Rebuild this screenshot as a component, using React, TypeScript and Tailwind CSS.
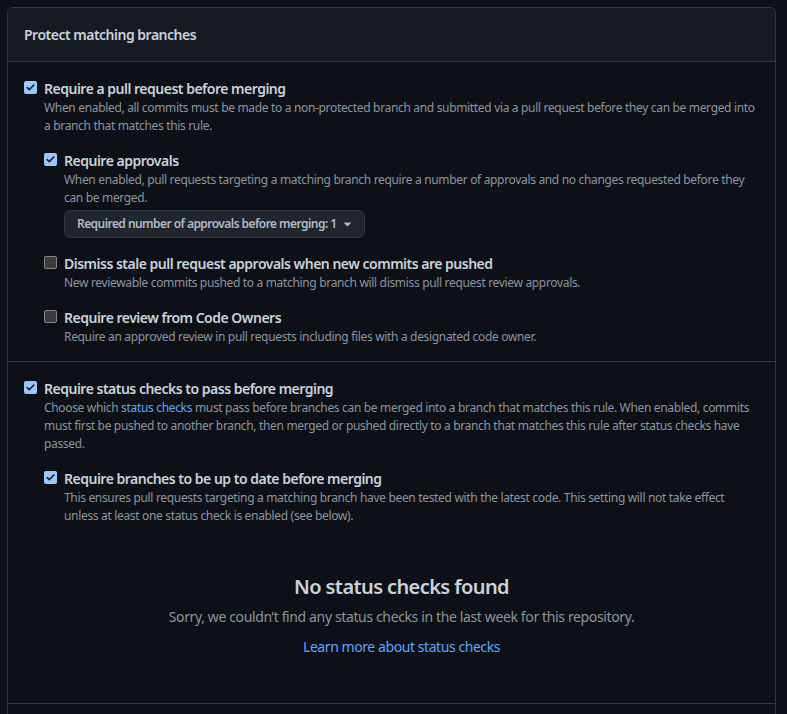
import React from "react";

function Check({ checked }: { checked: boolean }) {
  if (checked) {
    return (
      <span className="mt-[3px] mr-[7px] flex h-[13px] w-[13px] shrink-0 items-center justify-center rounded-[2px] bg-[#99c8ff]">
        <svg width="11" height="11" viewBox="0 0 11 11">
          <path d="M2.2 5.6 L4.3 7.7 L8.8 3.0" fill="none" stroke="#1d232b" strokeWidth="1.7" strokeLinecap="round" strokeLinejoin="round" />
        </svg>
      </span>
    );
  }
  return <span className="mt-[3px] mr-[7px] h-[13px] w-[13px] shrink-0 rounded-[2px] border border-[#858585] bg-[#3b3b3b]" />;
}

function Item({
  checked,
  title,
  children,
  className = "",
}: {
  checked: boolean;
  title: string;
  children?: React.ReactNode;
  className?: string;
}) {
  return (
    <div className={"flex " + className}>
      <Check checked={checked} />
      <div className="min-w-0 flex-1">
        <div className="text-[14px] leading-[21px] font-semibold tracking-[-0.5px] text-[#c9d1d9]">{title}</div>
        {children}
      </div>
    </div>
  );
}

function Desc({ children }: { children: React.ReactNode }) {
  return <p className="text-[12px] leading-[18px] tracking-[-0.33px] text-[#8b949e]">{children}</p>;
}

export default function App() {
  return (
    <div
      className="min-h-[714px] w-full overflow-hidden bg-[#0d1117] pt-[7px] pl-[7px]"
      style={{ fontFamily: '"Noto Sans", "Liberation Sans", sans-serif' }}
    >
      <div className="w-[769px] rounded-t-[6px] border border-[#30363d]">
        <div className="rounded-t-[6px] border-b border-[#30363d] bg-[#161b22] px-4 py-4">
          <h3 className="text-[14px] leading-[21px] font-semibold tracking-[-0.5px] text-[#c9d1d9]">Protect matching branches</h3>
        </div>

        <div className="border-b border-[#30363d] px-4 pt-4 pb-[15px]">
          <Item checked title="Require a pull request before merging">
            <Desc>
              When enabled, all commits must be made to a non-protected branch and submitted via a pull request before they can be merged into a branch that matches this rule.
            </Desc>
            <Item checked title="Require approvals" className="mt-[15px]">
              <Desc>
                When enabled, pull requests targeting a matching branch require a number of approvals and no changes requested before they can be merged.
              </Desc>
              <button className="mt-[3px] flex h-[28px] items-center rounded-[6px] border border-[#30363d] bg-[#21262d] pr-[12px] pl-[12px] text-[12px] font-semibold tracking-[-0.56px] text-[#adbac7]">
                Required number of approvals before merging: 1
                <svg className="ml-[6px]" width="9" height="9" viewBox="0 0 9 9">
                  <path d="M0.5 2.5 L8.5 2.5 L4.5 6.5 Z" fill="#adbac7" />
                </svg>
              </button>
            </Item>
            <Item checked={false} title="Dismiss stale pull request approvals when new commits are pushed" className="mt-[15px]">
              <Desc>New reviewable commits pushed to a matching branch will dismiss pull request review approvals.</Desc>
            </Item>
            <Item checked={false} title="Require review from Code Owners" className="mt-[15px]">
              <Desc>Require an approved review in pull requests including files with a designated code owner.</Desc>
            </Item>
          </Item>
        </div>

        <div className="border-b border-[#30363d] px-4 pt-4 pb-[15px]">
          <Item checked title="Require status checks to pass before merging">
            <Desc>
              Choose which <a className="text-[#58a6ff]">status checks</a> must pass before branches can be merged into a branch that matches this rule. When enabled, commits must first be pushed to another branch, then merged or pushed directly to a branch that matches this rule after status checks have passed.
            </Desc>
            <Item checked title="Require branches to be up to date before merging" className="mt-[15px]">
              <Desc>
                This ensures pull requests targeting a matching branch have been tested with the latest code. This setting will not take effect unless at least one status check is enabled (see below).
              </Desc>
            </Item>
            <div className="mt-4 flex flex-col items-center px-8 pt-[31px] pb-[31px] text-center">
              <h3 className="text-[20px] leading-[30px] font-semibold tracking-[-0.6px] text-[#c9d1d9]">No status checks found</h3>
              <p className="mt-[4px] text-[14px] leading-[21px] tracking-[-0.37px] text-[#8b949e]">
                Sorry, we couldn’t find any status checks in the last week for this repository.
              </p>
              <p className="mt-[9px] text-[14px] leading-[21px] tracking-[-0.43px]">
                <a className="text-[#58a6ff]">Learn more about status checks</a>
              </p>
            </div>
          </Item>
        </div>
        <div className="h-[40px]" />
      </div>
    </div>
  );
}
